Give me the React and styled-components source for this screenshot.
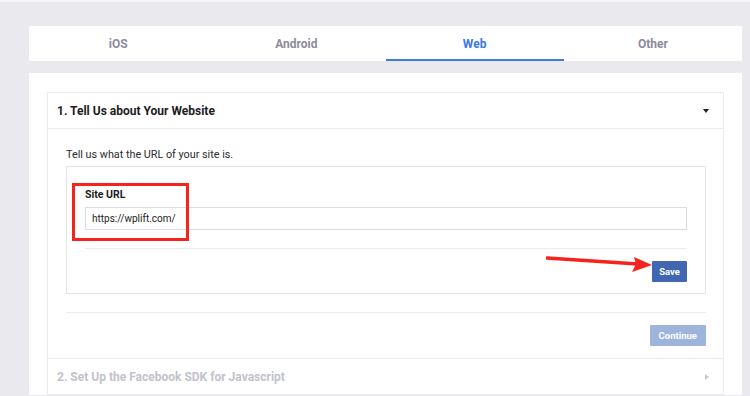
import React from 'react'
import styled, { createGlobalStyle } from 'styled-components'

const GlobalStyle = createGlobalStyle`
  body {
    margin: 0;
    background: #e9e9ee;
    font-family: Roboto, "Liberation Sans", sans-serif;
  }
`

const Page = styled.div`
  border-top: 2px solid #f6f6f8;
  padding: 24px 8px 0 29px;
  height: 370px;
  overflow: hidden;
`

const Tabs = styled.div`
  display: grid;
  grid-template-columns: repeat(4, 1fr);
  height: 35px;
  background: #fff;
  border-radius: 2px 2px 0 0;
`

const Tab = styled.div`
  display: flex;
  align-items: center;
  justify-content: center;
  font-size: 12px;
  font-weight: 700;
  color: ${props => props.active ? '#3b78e7' : '#8d8b9b'};
  border-bottom: 2px solid ${props => props.active ? '#3b7ce4' : 'transparent'};
  box-sizing: border-box;
  padding-top: 2px;
`

const Card = styled.div`
  margin-top: 12px;
  background: #fff;
  padding: 19px 18px 0 18px;
`

const Section = styled.div`
  border: 1px solid #ebebef;
  border-bottom: none;
`

const Header = styled.div`
  display: flex;
  align-items: center;
  justify-content: space-between;
  height: 35px;
  padding: 0 14px 0 9px;
  font-size: 12px;
  font-weight: 700;
  color: ${props => props.muted ? '#c3c2cb' : '#1c1c22'};
  border-bottom: 1px solid #ebebef;
`

const Caret = styled.span`
  width: 0;
  height: 0;
  border-left: ${props => props.right ? '4px' : '3.5px'} solid ${props => props.right ? '#c9c8d0' : 'transparent'};
  border-right: ${props => props.right ? '0' : '3.5px solid transparent'};
  border-top: ${props => props.right ? '3.5px solid transparent' : '4px solid #222'};
  border-bottom: ${props => props.right ? '3.5px solid transparent' : '0'};
`

const Body = styled.div`
  padding: 18px 17px 12px 18px;
  border-bottom: 1px solid #ebebef;
`

const Intro = styled.p`
  margin: 0 0 3px;
  font-size: 10.8px;
  line-height: 16px;
  color: #2b2b30;
`

const Box = styled.div`
  position: relative;
  border: 1px solid #e3e3e8;
  padding: 21px 18px 11px 18px;
`

const Label = styled.div`
  font-size: 10.5px;
  font-weight: 700;
  color: #1d1d21;
  line-height: 14px;
  margin-bottom: 5px;
`

const Input = styled.div`
  height: 21px;
  border: 1px solid #dcdce2;
  padding-left: 6px;
  display: flex;
  align-items: center;
  font-size: 10px;
  color: #1d1d21;
`

const Actions = styled.div`
  position: relative;
  display: flex;
  justify-content: flex-end;
  margin-top: 18px;
  padding-top: 12px;
  border-top: ${props => props.lined ? '1px solid #ebebef' : 'none'};
`

const Button = styled.div`
  height: 21px;
  padding: 0 ${props => props.disabled ? '9px' : '7px'};
  display: flex;
  align-items: center;
  font-size: 9.5px;
  font-weight: 700;
  color: #fff;
  background: ${props => props.disabled ? '#9db4dc' : '#4267b2'};
  border-radius: 1px;
`

const Highlight = styled.div`
  position: absolute;
  left: 5px;
  top: 16px;
  width: 111px;
  height: 52px;
  border: 3px solid #f5231b;
`

const Arrow = styled.svg`
  position: absolute;
  left: 461px;
  top: 7px;
`

export default function App() {
  return (
    <Page>
      <GlobalStyle />
      <Tabs>
        <Tab>iOS</Tab>
        <Tab>Android</Tab>
        <Tab active>Web</Tab>
        <Tab>Other</Tab>
      </Tabs>
      <Card>
        <Section>
          <Header>
            1. Tell Us about Your Website
            <Caret />
          </Header>
          <Body>
            <Intro>Tell us what the URL of your site is.</Intro>
            <Box>
              <Label>Site URL</Label>
              <Input>https://wplift.com/</Input>
              <Actions lined>
                <Arrow width="108" height="18" viewBox="0 0 108 18">
                  <path d="M1 2 L92 8" stroke="#f5231b" strokeWidth="3.5" strokeLinecap="round" />
                  <path d="M88 1 L106 9 L86 16 L90 8 Z" fill="#f5231b" />
                </Arrow>
                <Button>Save</Button>
              </Actions>
              <Highlight />
            </Box>
            <Actions lined>
              <Button disabled>Continue</Button>
            </Actions>
          </Body>
          <Header muted>
            2. Set Up the Facebook SDK for Javascript
            <Caret right />
          </Header>
        </Section>
      </Card>
    </Page>
  )
}
